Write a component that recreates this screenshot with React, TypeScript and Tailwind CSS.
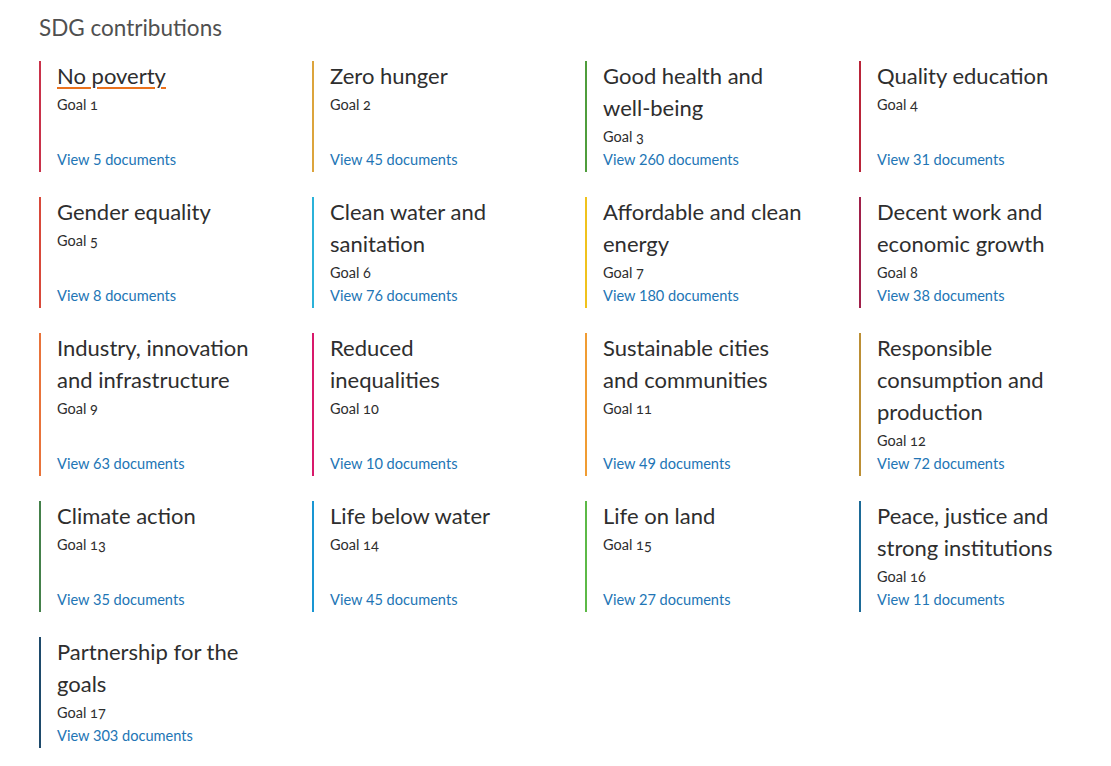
const goals = [
  { n: 1, title: "No poverty", docs: 5, color: "#c9324a" },
  { n: 2, title: "Zero hunger", docs: 45, color: "#dca43c" },
  { n: 3, title: "Good health and\nwell-being", docs: 260, color: "#4f9d3c" },
  { n: 4, title: "Quality education", docs: 31, color: "#b92439" },
  { n: 5, title: "Gender equality", docs: 8, color: "#d8493a" },
  { n: 6, title: "Clean water and\nsanitation", docs: 76, color: "#2bb2d9" },
  { n: 7, title: "Affordable and clean\nenergy", docs: 180, color: "#f0c21c" },
  { n: 8, title: "Decent work and\neconomic growth", docs: 38, color: "#a0204a" },
  { n: 9, title: "Industry, innovation\nand infrastructure", docs: 63, color: "#e8733a" },
  { n: 10, title: "Reduced\ninequalities", docs: 10, color: "#d8196b" },
  { n: 11, title: "Sustainable cities\nand communities", docs: 49, color: "#f09c33" },
  { n: 12, title: "Responsible\nconsumption and\nproduction", docs: 72, color: "#bc8f35" },
  { n: 13, title: "Climate action", docs: 35, color: "#44804a" },
  { n: 14, title: "Life below water", docs: 45, color: "#1996d3" },
  { n: 15, title: "Life on land", docs: 27, color: "#5cb947" },
  { n: 16, title: "Peace, justice and\nstrong institutions", docs: 11, color: "#1d6a97" },
  { n: 17, title: "Partnership for the\ngoals", docs: 303, color: "#1e4a6b" },
];

export default function App() {
  return (
    <div className="min-h-screen bg-white pl-[39px] pt-[14px] font-['Lato','Noto_Sans',sans-serif]">
      <h2 className="text-[22.5px] leading-[28px] text-[#505050]">SDG contributions</h2>
      <div className="mt-[19px] grid grid-cols-[273px_273px_274px_1fr] gap-y-[25px]">
        {goals.map((g) => (
          <div
            key={g.n}
            className="flex flex-col border-l-2 pl-4 pr-2"
            style={{ borderColor: g.color }}
          >
            <a href="#" className="-mt-px whitespace-pre-line text-[22px] leading-[32px] text-[#2e2e2e]">
              <span
                className={
                  g.n === 1
                    ? "underline decoration-[#e9711c] decoration-2 underline-offset-[3px]"
                    : ""
                }
              >
                {g.title}
              </span>
            </a>
            <div className="mt-px text-[14.5px] leading-[23px] text-[#2e2e2e] [font-feature-settings:'onum']">
              Goal {g.n}
            </div>
            <a href="#" className="mt-auto text-[14.6px] leading-[24px] text-[#2275b5]">
              View {g.docs} documents
            </a>
          </div>
        ))}
      </div>
    </div>
  );
}
